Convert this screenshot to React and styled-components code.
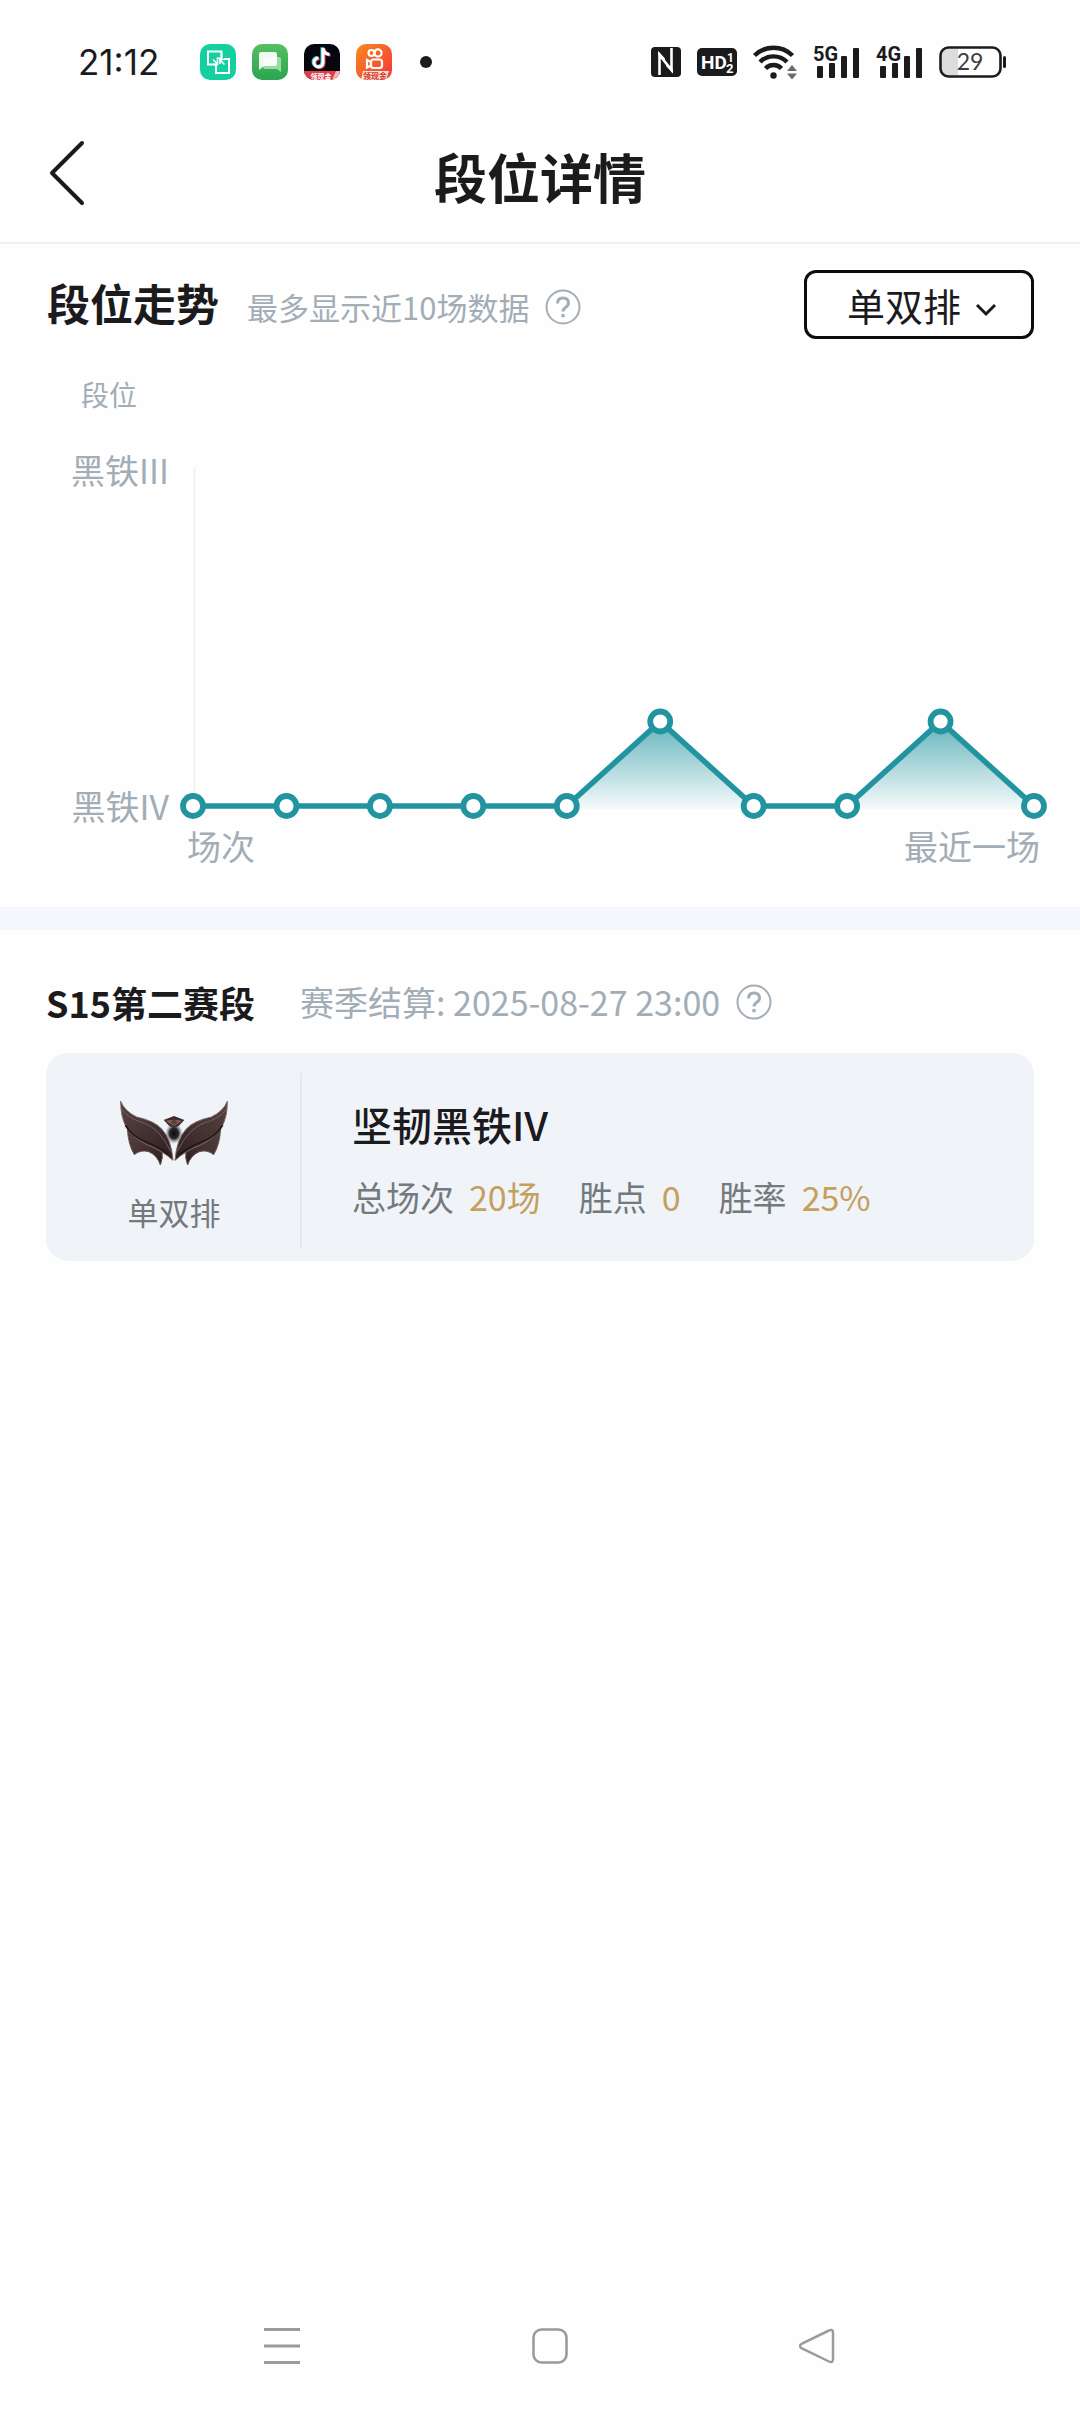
import { useState } from 'react';
import styled, { createGlobalStyle } from 'styled-components';

const GlobalStyle = createGlobalStyle`
  * {
    box-sizing: border-box;
  }
  body {
    margin: 0;
    background: #fefefe;
    color: #1b1b1d;
    font-family: 'Noto Sans CJK SC', 'Noto Sans', sans-serif;
  }
`;

const Page = styled.div`
  display: flex;
  flex-direction: column;
  min-height: 100vh;
`;

const StatusBar = styled.div`
  align-items: center;
  display: flex;
  height: 124px;
  justify-content: space-between;
  padding: 0 74px 0 78px;
`;

const StatusGroup = styled.div`
  align-items: center;
  display: flex;
  gap: 16px;
`;

const Clock = styled.span`
  font-family: 'Inter', sans-serif;
  font-size: 35px;
  line-height: 36px;
  margin-right: 25px;
`;

const Dot = styled.i`
  background: #1b1b1d;
  border-radius: 50%;
  height: 12px;
  margin-left: 12px;
  width: 12px;
`;

const Header = styled.header`
  align-items: center;
  border-bottom: 2px solid #f0f0f1;
  display: grid;
  grid-template-columns: 1fr auto 1fr;
  height: 120px;
  padding: 0 48px 20px;
`;

const IconButton = styled.button`
  background: none;
  border: 0;
  color: inherit;
  cursor: pointer;
  display: flex;
  justify-self: start;
  padding: 0;
`;

const Title = styled.h1`
  font-size: 53px;
  font-weight: 700;
  line-height: 60px;
  margin: 0;
  padding-top: 5px;
`;

const Trend = styled.section`
  border-bottom: 23px solid #f4f7fb;
  padding: 26px 0 44px;
`;

const TrendHead = styled.div`
  align-items: center;
  display: flex;
  height: 69px;
  padding: 0 46px 0 47px;
`;

const TrendTitle = styled.h2`
  font-size: 43px;
  font-weight: 700;
  line-height: 48px;
  margin: 0 28px 0 0;
  padding-bottom: 5px;
`;

const Hint = styled.span`
  color: #a3adb6;
  font-size: ${({ $size }) => $size}px;
  line-height: 40px;
  margin-right: 16px;
`;

const HelpButton = styled(IconButton)`
  color: #a3adb6;
`;

const TrendNote = styled.div`
  align-items: center;
  display: flex;
  padding-top: 5px;
`;

const QueueField = styled.label`
  align-items: center;
  display: flex;
  margin-left: auto;
  position: relative;
`;

const QueueSelect = styled.select`
  appearance: none;
  background: #fff;
  border: 3px solid #0c0c0e;
  border-radius: 12px;
  color: #1b1b1d;
  font-family: inherit;
  font-size: 38px;
  height: 69px;
  line-height: 48px;
  padding: 0 0 0 40px;
  width: 230px;
`;

const Caret = styled.svg`
  pointer-events: none;
  position: absolute;
  right: 36px;
`;

const AxisName = styled.div`
  color: #a3adb6;
  font-size: 28px;
  line-height: 34px;
  padding: 38px 0 0 81px;
`;

const Chart = styled.div`
  display: flex;
  gap: 9px;
  margin-top: 42px;
  padding-right: 32px;
`;

const Ranks = styled.div`
  color: #a3adb6;
  display: flex;
  flex: 0 0 169px;
  flex-direction: column;
  font-size: 34px;
  justify-content: space-between;
  line-height: 34px;
  text-align: right;
`;

const Plot = styled.svg`
  flex: 1;
  min-width: 0;
`;

const Matches = styled.div`
  color: #a3adb6;
  display: flex;
  font-size: 34px;
  justify-content: space-between;
  line-height: 34px;
  padding: 6px 40px 0 187px;
`;

const Season = styled.section`
  padding: 48px 46px 0;
`;

const SeasonHead = styled.div`
  align-items: center;
  display: flex;
  height: 48px;
`;

const SeasonTitle = styled.h2`
  font-size: 36px;
  font-weight: 700;
  line-height: 48px;
  margin: 0 45px 0 0;
`;

const Card = styled.div`
  background: #f0f3f8;
  border-radius: 22px;
  display: flex;
  margin-top: 27px;
  padding: 20px 0 12px;
`;

const Badge = styled.div`
  align-items: center;
  border-right: 2px solid #e5e9ee;
  color: #727a7e;
  display: flex;
  flex: 0 0 256px;
  flex-direction: column;
  font-size: 31px;
  gap: 28px;
  height: 176px;
  line-height: 34px;
  padding: 27px 0 0 2px;
`;

const Summary = styled.div`
  padding: 27px 0 0 50px;
`;

const RankName = styled.h3`
  font-size: 40px;
  font-weight: 500;
  line-height: 48px;
  margin: 0;
`;

const Stats = styled.dl`
  display: flex;
  font-size: 34px;
  gap: 38px;
  line-height: 34px;
  margin: 32px 0 0;
`;

const Stat = styled.div`
  display: flex;
  gap: 15px;

  dt {
    color: #727a7e;
  }
  dd {
    color: #c49f5e;
    margin: 0;
  }
`;

const NavBar = styled.nav`
  align-items: center;
  color: #9b9b9b;
  display: flex;
  height: 132px;
  justify-content: space-between;
  margin-top: auto;
  padding: 0 245px 0 264px;
`;

const TransferIcon = () => (
  <svg width="36" height="36" viewBox="0 0 36 36">
    <rect width="36" height="36" rx="10" fill="#14cfa0" />
    <g fill="none" stroke="#fff" strokeWidth="2">
      <path d="M12 20.500H8V7.500h13.500v5M16 24v5h13V15h-5" />
      <path d="M21.500 10v4.500h-5M16 26v-5.500h-4" />
      <path d="M13 15.500l4.500 4.500M17.500 16v4.500H13M24.500 20.500L20 16M20 20v-4.500h4.500" strokeWidth="1.600" />
    </g>
  </svg>
);

const MessageIcon = () => (
  <svg width="36" height="36" viewBox="0 0 36 36">
    <defs>
      <linearGradient id="message" x2="0" y2="1">
        <stop offset="0" stopColor="#55bf62" />
        <stop offset="1" stopColor="#2ca450" />
      </linearGradient>
    </defs>
    <rect width="36" height="36" rx="10" fill="url(#message)" />
    <path d="M13 13h14a2 2 0 0 1 2 2v13l-4-3H13a2 2 0 0 1-2-2z" fill="#9bdca4" />
    <path d="M9 8h14a2 2 0 0 1 2 2v10a2 2 0 0 1-2 2H12l-5 4V10a2 2 0 0 1 2-2z" fill="#fff" fillOpacity=".92" />
  </svg>
);

const DouyinIcon = () => (
  <svg width="36" height="36" viewBox="0 0 36 36">
    <clipPath id="douyin">
      <rect width="36" height="36" rx="10" />
    </clipPath>
    <g clipPath="url(#douyin)">
      <rect width="36" height="36" fill="#06060e" />
      <g fill="none" strokeWidth="3">
        <path d="M19 4v14.500a4.500 4.500 0 1 1-4.500-4.500M19 4q1 6 6.500 6.500" stroke="#38d8dc" transform="translate(-1 -.7)" />
        <path d="M19 4v14.500a4.500 4.500 0 1 1-4.500-4.500M19 4q1 6 6.500 6.500" stroke="#f1416b" transform="translate(1 .7)" />
        <path d="M19 4v14.500a4.500 4.500 0 1 1-4.500-4.500M19 4q1 6 6.500 6.500" stroke="#fff" />
      </g>
      <path d="M0 27h36v9H0z" fill="#e23b4c" />
      <path d="M28 36l4-9h4v9z" fill="#f6b9b4" />
      <text x="17" y="34.500" fill="#fff" fontSize="7" fontWeight="700" textAnchor="middle">领现金</text>
    </g>
  </svg>
);

const KuaishouIcon = () => (
  <svg width="36" height="36" viewBox="0 0 36 36">
    <defs>
      <linearGradient id="kuaishou" x2="1" y2="1">
        <stop offset="0" stopColor="#fb8a1e" />
        <stop offset="1" stopColor="#f0353a" />
      </linearGradient>
      <clipPath id="kuaishouBox">
        <rect width="36" height="36" rx="10" />
      </clipPath>
    </defs>
    <g clipPath="url(#kuaishouBox)">
      <rect width="36" height="36" fill="url(#kuaishou)" />
      <g fill="none" stroke="#fff" strokeWidth="2.200">
        <circle cx="15.500" cy="9" r="3" />
        <circle cx="22" cy="9" r="3.600" />
        <rect x="15" y="15.500" width="11" height="8.500" rx="2.500" />
        <path d="M15 18l-4-2v7.500l4-2" />
      </g>
      <path d="M7 27h26l-3 9H5z" fill="#fbe3cf" />
      <text x="19" y="34.500" fill="#d3302c" fontSize="8" fontWeight="700" textAnchor="middle">领现金</text>
    </g>
  </svg>
);

const NfcIcon = () => (
  <svg width="30" height="30" viewBox="0 0 30 30">
    <rect width="30" height="30" rx="4" fill="#1b1b1d" />
    <path d="M8.500 28V8L20.500 23V1" fill="none" stroke="#fff" strokeWidth="2.600" />
    <path d="M7.200 4L14 11.500V15L7.200 8zM22 26l-7-7v-3.500l7 7z" fill="#fff" />
  </svg>
);

const HdIcon = () => (
  <svg width="40" height="28" viewBox="0 0 40 28" fontFamily="Roboto, sans-serif" fontWeight="700">
    <rect width="40" height="28" rx="5" fill="#1b1b1d" />
    <text x="4" y="21" fill="#fff" fontSize="19">HD</text>
    <text x="30" y="14" fill="#fff" fontSize="12">1</text>
    <text x="29" y="25" fill="#fff" fontSize="13">2</text>
  </svg>
);

const WifiIcon = () => (
  <svg width="44" height="34" viewBox="0 0 44 34">
    <g fill="none" stroke="#1b1b1d" strokeWidth="4.400">
      <path d="M1.500 10.500a27 27 0 0 1 38 0" />
      <path d="M7 17a19 19 0 0 1 27 0" />
      <path d="M12.500 23.500a11 11 0 0 1 16 0" />
    </g>
    <circle cx="20.500" cy="30.500" r="3.200" fill="#1b1b1d" />
    <path d="M34 26l5-6 5 6zM34 28.500l5 6 5-6z" fill="#6a6a6c" />
  </svg>
);

const Signal = ({ label }) => (
  <svg width="47" height="47" viewBox="0 -7 47 47">
    <g fill="#1b1b1d">
      <rect x="4" y="20" width="6" height="12" rx="1" />
      <rect x="16" y="17" width="6" height="15" rx="1" />
      <rect x="28" y="10" width="6" height="22" rx="1" />
      <rect x="40" y="2" width="6" height="30" rx="1" />
      <text
        x="0"
        y="15"
        fontFamily="Roboto, sans-serif"
        fontSize="20"
        fontWeight="700"
        paintOrder="stroke"
        stroke="#fefefe"
        strokeWidth="2"
      >
        {label}
      </text>
    </g>
  </svg>
);

const BatteryIcon = () => (
  <svg width="67" height="32" viewBox="0 0 67 32">
    <path d="M9 3h10v26H9q-6 0-6-6V9q0-6 6-6z" fill="#dcdcdd" />
    <rect x="1.500" y="1.500" width="60" height="29" rx="8" fill="none" stroke="#1b1b1d" strokeWidth="2.600" />
    <rect x="64" y="10" width="3" height="12" rx="1.500" fill="#1b1b1d" />
    <text x="31" y="24" fill="#3c3c3e" fontFamily="Lato, sans-serif" fontSize="23" textAnchor="middle">29</text>
  </svg>
);

const HelpIcon = () => (
  <svg width="36" height="36" viewBox="0 0 36 36" fill="none" stroke="currentColor">
    <circle cx="18" cy="18" r="16.500" strokeWidth="2" />
    <path d="M12.500 14.500q0-5.500 5.500-5.500t5.500 5q0 2.500-2.700 4.200T18 22.500" strokeWidth="3" />
    <path d="M18 25v3.200" strokeWidth="3.200" />
  </svg>
);

// One half of the iron crest; the other half is its mirror image.
const Wing = ({ transform }) => (
  <g transform={transform}>
    <path
      d="M82 145Q84 195 103 226Q122 210 146 217Q172 228 181 257Q190 236 186 214L150 170Z"
      fill="url(#feather)"
      stroke="#6b5351"
      strokeWidth="3"
    />
    <path
      d="M62 66Q74 96 110 113Q165 125 186 150Q214 180 219 243Q188 214 140 196Q94 172 78 142Q62 112 62 66Z"
      fill="url(#feather)"
      stroke="#7d6763"
      strokeWidth="3"
    />
    <path d="M66 90Q84 118 130 130Q178 146 212 216" fill="none" stroke="#75605d" strokeWidth="3" />
    <path d="M76 138Q96 172 142 189Q178 204 204 224" fill="none" stroke="#241617" strokeWidth="5" />
  </g>
);

const IronCrest = () => (
  <svg width="110" height="67" viewBox="57 62 330 201" role="img" aria-label="黑铁">
    <defs>
      <linearGradient id="feather" x2="1" y2="1">
        <stop offset="0" stopColor="#544341" />
        <stop offset=".6" stopColor="#412f2f" />
        <stop offset="1" stopColor="#2b1c1e" />
      </linearGradient>
      <radialGradient id="core">
        <stop offset="0" stopColor="#0c0c10" />
        <stop offset=".5" stopColor="#26282c" />
        <stop offset="1" stopColor="#9aa0a6" stopOpacity="0" />
      </radialGradient>
    </defs>
    <ellipse cx="222" cy="162" rx="27" ry="32" fill="url(#core)" />
    <Wing />
    <Wing transform="translate(444 0) scale(-1 1)" />
    <path d="M191 122L222 110L253 122L236 140L222 146L208 140Z" fill="#3d2c2b" />
    <path d="M198 124L222 121L246 124L222 140Z" fill="#8a6a5d" />
    <path d="M210 128L222 120L234 128L222 138Z" fill="#5a4039" />
  </svg>
);

// Height above the 黑铁IV line, as a share of one division.
const history = [0, 0, 0, 0, 0, 0.25, 0, 0, 0.25, 0];
const BASE = 353;
const DIVISION = 338;
const points = history.map((value, i) => [15 + (i * 841) / 9, BASE - value * DIVISION]);
const line = points.map((p) => p.join(',')).join(' ');

const TrendChart = () => (
  <Plot viewBox="0 0 870 370" role="img" aria-label="段位走势">
    <defs>
      <linearGradient id="area" gradientUnits="userSpaceOnUse" x1="0" x2="0" y1="268" y2="356">
        <stop offset="0" stopColor="#2094a0" stopOpacity=".7" />
        <stop offset="1" stopColor="#2094a0" stopOpacity=".04" />
      </linearGradient>
    </defs>
    <path d="M16.500 14V350" stroke="#eff1f3" strokeWidth="2" />
    <polygon points={`15,356 ${line} 856,356`} fill="url(#area)" />
    <polyline points={line} fill="none" stroke="#2294a0" strokeWidth="5.500" />
    {points.map(([x, y]) => (
      <circle key={x} cx={x} cy={y} r="10" fill="#fff" stroke="#2294a0" strokeWidth="5.800" />
    ))}
  </Plot>
);

const stats = [
  { name: '总场次', value: '20场' },
  { name: '胜点', value: '0' },
  { name: '胜率', value: '25%' },
];

const App = () => {
  const [queue, setQueue] = useState('单双排');

  return (
    <Page>
      <GlobalStyle />
      <StatusBar>
        <StatusGroup>
          <Clock>21:12</Clock>
          <TransferIcon />
          <MessageIcon />
          <DouyinIcon />
          <KuaishouIcon />
          <Dot />
        </StatusGroup>
        <StatusGroup>
          <NfcIcon />
          <HdIcon />
          <WifiIcon />
          <Signal label="5G" />
          <Signal label="4G" />
          <BatteryIcon />
        </StatusGroup>
      </StatusBar>

      <Header>
        <IconButton aria-label="返回">
          <svg width="38" height="66" viewBox="0 0 38 66">
            <path d="M34 3L4 33l30 30" fill="none" stroke="currentColor" strokeLinecap="round" strokeLinejoin="round" strokeWidth="4" />
          </svg>
        </IconButton>
        <Title>段位详情</Title>
      </Header>

      <Trend>
        <TrendHead>
          <TrendTitle>段位走势</TrendTitle>
          <TrendNote>
            <Hint $size={31}>最多显示近10场数据</Hint>
            <HelpButton aria-label="段位走势说明">
              <HelpIcon />
            </HelpButton>
          </TrendNote>
          <QueueField>
            <QueueSelect
              aria-label="队列"
              value={queue}
              onChange={(event) => setQueue(event.target.value)}
            >
              <option>单双排</option>
            </QueueSelect>
            <Caret width="24" height="24" viewBox="0 0 24 24">
              <path d="M3 12l9 9 9-9" fill="none" stroke="#1b1b1d" strokeWidth="3" />
            </Caret>
          </QueueField>
        </TrendHead>
        <AxisName>段位</AxisName>
        <Chart>
          <Ranks>
            <span>黑铁III</span>
            <span>黑铁IV</span>
          </Ranks>
          <TrendChart />
        </Chart>
        <Matches>
          <span>场次</span>
          <span>最近一场</span>
        </Matches>
      </Trend>

      <Season>
        <SeasonHead>
          <SeasonTitle>S15第二赛段</SeasonTitle>
          <Hint $size={34}>赛季结算: 2025-08-27 23:00</Hint>
          <HelpButton aria-label="赛季结算说明">
            <HelpIcon />
          </HelpButton>
        </SeasonHead>
        <Card>
          <Badge>
            <IronCrest />
            {queue}
          </Badge>
          <Summary>
            <RankName>坚韧黑铁IV</RankName>
            <Stats>
              {stats.map(({ name, value }) => (
                <Stat key={name}>
                  <dt>{name}</dt>
                  <dd>{value}</dd>
                </Stat>
              ))}
            </Stats>
          </Summary>
        </Card>
      </Season>

      <NavBar>
        <IconButton aria-label="最近任务">
          <svg width="36" height="36" viewBox="0 0 36 36">
            <path d="M0 1.500h36M0 18h36M0 34.500h36" stroke="currentColor" strokeWidth="3" />
          </svg>
        </IconButton>
        <IconButton aria-label="主屏幕">
          <svg width="36" height="36" viewBox="0 0 36 36">
            <rect x="1.500" y="1.500" width="33" height="33" rx="8" fill="none" stroke="currentColor" strokeWidth="2.600" />
          </svg>
        </IconButton>
        <IconButton aria-label="返回上一页">
          <svg width="36" height="36" viewBox="0 0 36 36">
            <path d="M30 2.500Q34 .5 34 5v26q0 4.500-4 2.500L3 20.500q-4-2.500 0-5z" fill="none" stroke="currentColor" strokeWidth="2.500" />
          </svg>
        </IconButton>
      </NavBar>
    </Page>
  );
};

export default App;
